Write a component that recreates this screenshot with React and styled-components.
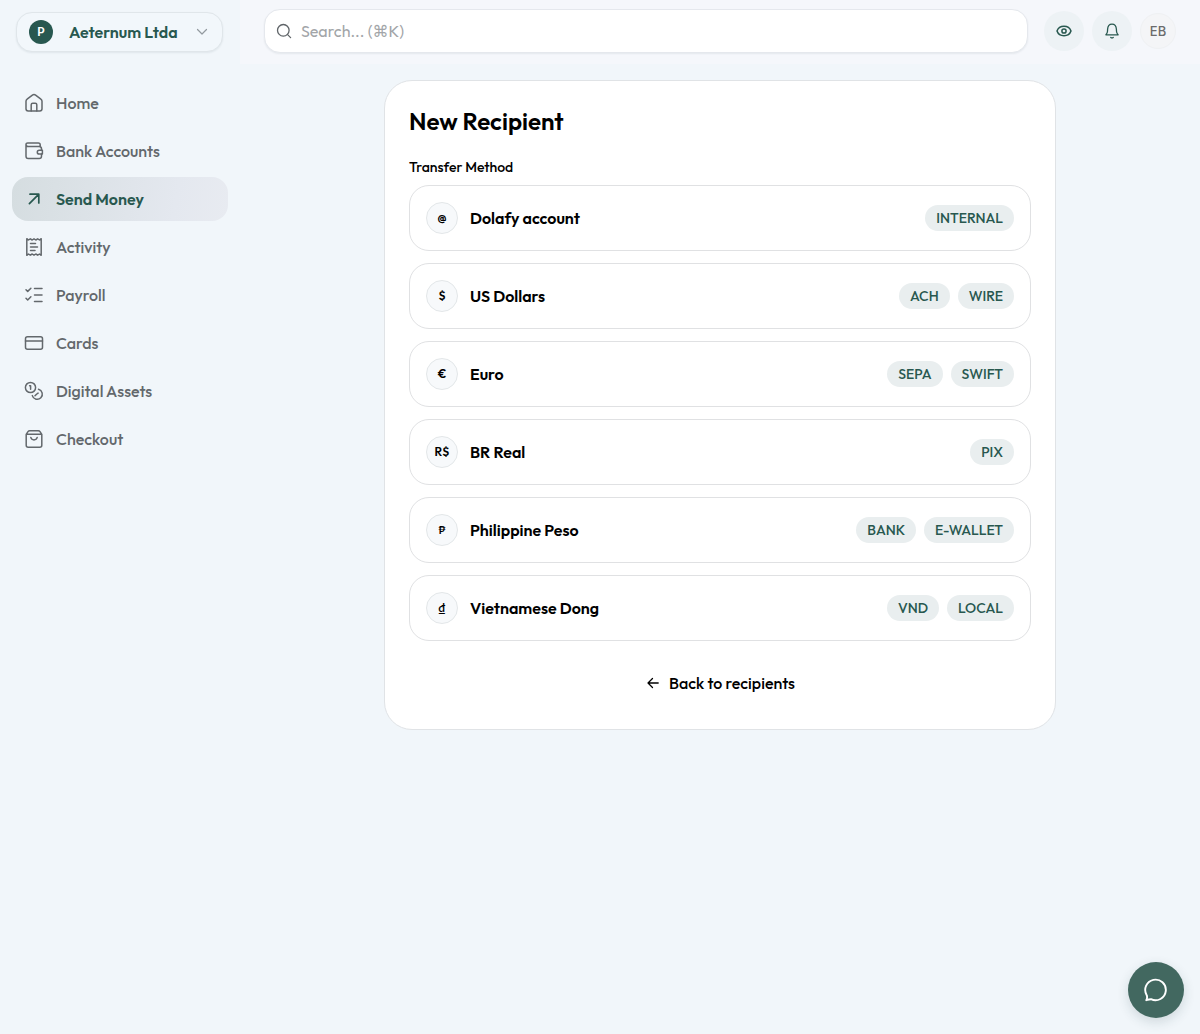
import React from "react";
import styled, { createGlobalStyle } from "styled-components";

const GlobalStyle = createGlobalStyle`
  *, *::before, *::after { box-sizing: border-box; }
  body {
    margin: 0;
    background: #f1f6fa;
    color: #000;
    font-family: Outfit, Lato, "DejaVu Sans", sans-serif;
    font-size: 16px;
    line-height: 24px;
    -webkit-font-smoothing: antialiased;
  }
  button, input { font: inherit; color: inherit; }
  button { cursor: pointer; }
`;

const Shell = styled.div`
  display: flex;
  min-height: 100vh;
`;

const Sidebar = styled.aside`
  flex: 0 0 240px;
  display: flex;
  flex-direction: column;
  gap: 17px;
  padding: 12px;
`;

const Switcher = styled.button`
  display: flex;
  align-items: center;
  height: 40px;
  margin: 0 5px 0 4px;
  padding: 0 12px;
  border: 1px solid #e0e6ea;
  border-radius: 16px;
  background: #f2f7fb;
  box-shadow: 0 1px 2px rgba(20, 50, 60, 0.08);
  color: #28584f;
  font-weight: 600;
`;

const CompanyMark = styled.span`
  display: grid;
  place-items: center;
  width: 24px;
  height: 24px;
  border-radius: 50%;
  background: #285850;
  color: #fff;
  font-size: 12px;
  line-height: 16px;
`;

const CompanyName = styled.span`
  flex: 1;
  padding-left: 16px;
  text-align: left;
  white-space: nowrap;
`;

const Nav = styled.nav`
  display: flex;
  flex-direction: column;
  gap: 4px;
  padding-top: 12px;
`;

const NavLink = styled.a`
  display: flex;
  align-items: center;
  gap: 12px;
  height: 44px;
  padding: 0 12px;
  border-radius: 16px;
  background: ${(p) => (p.$active ? "linear-gradient(100deg, #d5dde0, #e4e8ef 75%, #e8ebf1)" : "transparent")};
  color: ${(p) => (p.$active ? "#28584f" : "#63686c")};
  font-weight: ${(p) => (p.$active ? 600 : 500)};
  text-decoration: none;
`;

const Svg = styled.svg`
  flex: none;
  width: ${(p) => p.$size}px;
  height: ${(p) => p.$size}px;
  fill: none;
  stroke: currentColor;
  stroke-width: ${(p) => p.$stroke || 1.5};
  stroke-linecap: round;
  stroke-linejoin: round;
`;

const Content = styled.div`
  flex: 1;
  min-width: 0;
`;

const Header = styled.header`
  display: flex;
  align-items: center;
  gap: 16px;
  height: 64px;
  padding: 0 24px 2px;
  background: #f5f7fb;
`;

const SearchBox = styled.label`
  flex: 1;
  display: flex;
  align-items: center;
  gap: 9px;
  height: 44px;
  padding: 0 11px;
  border: 1px solid #e5e8ed;
  border-radius: 16px;
  background: #fff;
  box-shadow: 0 1px 2px rgba(20, 40, 60, 0.07);
  color: #5f6468;
`;

const SearchInput = styled.input`
  flex: 1;
  min-width: 0;
  padding: 0;
  border: 0;
  outline: 0;
  background: transparent;
  &::placeholder { color: #a2a5a8; opacity: 1; }
`;

const Actions = styled.div`
  display: flex;
  align-items: center;
  gap: 8px;
`;

const RoundButton = styled.button`
  display: grid;
  place-items: center;
  width: 40px;
  height: 40px;
  padding: 0;
  border: 0;
  border-radius: 50%;
  background: #edf2f5;
  color: #28584f;
`;

const Avatar = styled.button`
  display: grid;
  place-items: center;
  width: 36px;
  height: 36px;
  padding: 0;
  border: 1px solid #eff1f3;
  border-radius: 50%;
  background: #f4f5f7;
  color: #6b6b6c;
  font-family: Inter, sans-serif;
  font-size: 13px;
  font-weight: 500;
`;

const Main = styled.main`
  padding: 16px 24px;
`;

const Card = styled.section`
  max-width: 672px;
  margin: 0 auto;
  padding: 24px;
  border: 1px solid #e0e3e6;
  border-radius: 28px;
  background: #fff;
`;

const Title = styled.h1`
  margin: 0 0 20px;
  font-size: 24px;
  line-height: 32px;
  font-weight: 600;
`;

const GroupLabel = styled.h2`
  margin: 0 0 8px;
  font-size: 14px;
  line-height: 20px;
  font-weight: 500;
`;

const MethodList = styled.div`
  display: flex;
  flex-direction: column;
  gap: 12px;
`;

const Method = styled.button`
  display: flex;
  align-items: center;
  gap: 12px;
  height: 66px;
  padding: 0 16px;
  border: 1px solid #e0e1e3;
  border-radius: 20px;
  background: #fff;
  text-align: left;
`;

const Symbol = styled.span`
  display: grid;
  place-items: center;
  width: 32px;
  height: 32px;
  border: 1px solid #e3e7e9;
  border-radius: 50%;
  background: #f7f9fb;
  font-size: 12px;
  line-height: 16px;
  font-weight: 600;
`;

const MethodName = styled.span`
  flex: 1;
  font-weight: 600;
`;

const Tags = styled.span`
  display: flex;
  gap: 8px;
`;

const Tag = styled.span`
  height: 26px;
  padding: 0 11px;
  border-radius: 13px;
  background: #e9eeef;
  color: #28584f;
  font-size: 14px;
  line-height: 26px;
  font-weight: 500;
`;

const BackButton = styled.button`
  display: flex;
  align-items: center;
  justify-content: center;
  gap: 8px;
  width: 100%;
  height: 44px;
  margin-top: 20px;
  padding: 0;
  border: 0;
  background: transparent;
  font-weight: 500;
`;

const ChatButton = styled.button`
  position: fixed;
  right: 16px;
  bottom: 16px;
  display: grid;
  place-items: center;
  width: 56px;
  height: 56px;
  padding: 0;
  border: 0;
  border-radius: 50%;
  background: #426860;
  color: #fff;
  box-shadow: 0 4px 12px rgba(30, 60, 70, 0.16);
`;

function Icon({ size = 20, box = 20, stroke, children }) {
  return (
    <Svg $size={size} $stroke={stroke} viewBox={`0 0 ${box} ${box}`} aria-hidden="true">
      {children}
    </Svg>
  );
}

const navItems = [
  {
    label: "Home",
    icon: (
      <>
        <path d="M2 8.200c0-.9.4-1.600 1.100-2.100l5.300-4a2.700 2.700 0 0 1 3.200 0l5.300 4c.7.5 1.100 1.200 1.100 2.100v7.600c0 1.200-.9 2.200-2.200 2.200H4.200C3 18 2 17 2 15.800Z" />
        <path d="M7.200 18v-6.300c0-.9.6-1.500 1.500-1.500h2.600c.9 0 1.500.6 1.500 1.500V18" />
      </>
    ),
  },
  {
    label: "Bank Accounts",
    icon: (
      <>
        <path d="M2 3.600v11.700c0 1.300 1 2.300 2.300 2.300h10.900c1.300 0 2.300-1 2.300-2.300v-2.200M2 3.600c0 1.100.8 1.900 1.900 1.900h11.300c1.300 0 2.300 1 2.300 2.300v1.400M2 3.600c0-1 .8-1.700 1.700-1.700h10.600c1.100 0 1.900.8 1.900 1.900v1.900" />
        <path d="M18.400 9.300h-3.200a1.900 1.900 0 0 0 0 3.800h3.200Z" />
      </>
    ),
  },
  { label: "Send Money", active: true, stroke: 1.7, icon: <path d="M5.400 14.600 14.600 5.400M6 5.200h8.800V14" /> },
  {
    label: "Activity",
    icon: (
      <>
        <path d="M2.800 1.700 4.500 3l1.800-1.200L8.200 3 10 1.800 11.800 3l1.900-1.200L15.500 3l1.700-1.300v16.600L15.500 17l-1.800 1.200-1.900-1.200-1.800 1.200L8.200 17l-1.900 1.200L4.500 17l-1.700 1.300Z" />
        <path d="M6.500 6.600h5M6.500 10h7M6.500 13.400h4.500" />
      </>
    ),
  },
  {
    label: "Payroll",
    icon: <path d="m2 4.700 1.700 1.700 3.200-3.200M2 13.300 3.700 15l3.200-3.200M10.500 3.600H18M10.500 10H18M10.500 16.400H18" />,
  },
  {
    label: "Cards",
    icon: (
      <>
        <rect x="1.500" y="3.700" width="17" height="12.600" rx="2" />
        <path d="M1.500 8h17" />
      </>
    ),
  },
  {
    label: "Digital Assets",
    icon: (
      <>
        <circle cx="6.500" cy="6.500" r="5.100" />
        <path d="M5.600 4.800h1v3.500M14.500 8.300a5.100 5.100 0 1 1-6.200 6.300M11 14.800l1.800-1.800M13.700 12.400l.4-.3" />
      </>
    ),
  },
  {
    label: "Checkout",
    icon: (
      <>
        <path d="M2.200 5.300 4 2.600c.4-.6 1-.9 1.700-.9h8.600c.7 0 1.300.3 1.700.9l1.800 2.700v10.900c0 1.100-.9 2-2 2H4.200c-1.100 0-2-.9-2-2ZM2.200 5.300h15.600" />
        <path d="M6.800 8.400a3.300 3.300 0 0 0 6.400 0" />
      </>
    ),
  },
];

const methods = [
  { symbol: "@", name: "Dolafy account", tags: ["INTERNAL"] },
  { symbol: "$", name: "US Dollars", tags: ["ACH", "WIRE"] },
  { symbol: "€", name: "Euro", tags: ["SEPA", "SWIFT"] },
  { symbol: "R$", name: "BR Real", tags: ["PIX"] },
  { symbol: "₱", name: "Philippine Peso", tags: ["BANK", "E-WALLET"] },
  { symbol: "₫", name: "Vietnamese Dong", tags: ["VND", "LOCAL"] },
];

export default function App() {
  return (
    <>
      <GlobalStyle />
      <Shell>
        <Sidebar>
          <Switcher type="button">
            <CompanyMark>P</CompanyMark>
            <CompanyName>Aeternum Ltda</CompanyName>
            <Icon size={16} box={16} stroke={1.2}>
              <path stroke="#939a9f" d="m3.500 5.500 4.500 4.500 4.500-4.500" />
            </Icon>
          </Switcher>
          <Nav aria-label="Main">
            {navItems.map((item) => (
              <NavLink key={item.label} href="#" $active={item.active} aria-current={item.active ? "page" : undefined}>
                <Icon stroke={item.stroke}>{item.icon}</Icon>
                {item.label}
              </NavLink>
            ))}
          </Nav>
        </Sidebar>
        <Content>
          <Header>
            <SearchBox>
              <Icon size={16} box={16} stroke={1.3}>
                <circle cx="7.300" cy="7.300" r="5.800" />
                <path d="m11.600 11.600 3 3" />
              </Icon>
              <SearchInput type="search" aria-label="Search" placeholder="Search... (⌘K)" />
            </SearchBox>
            <Actions>
              <RoundButton type="button" aria-label="Hide balances">
                <Icon size={16} box={16}>
                  <path d="M1 8c1-2.800 3.800-4.700 7-4.700S14 5.200 15 8c-1 2.800-3.800 4.700-7 4.700S2 10.800 1 8Z" />
                  <circle cx="8" cy="8" r="2.100" />
                </Icon>
              </RoundButton>
              <RoundButton type="button" aria-label="Notifications">
                <Icon size={16} box={16} stroke={1.3}>
                  <path d="M1.900 11.800c1-.9 1.500-2 1.600-3.500l.1-2.100C3.800 3.200 5.500 1.200 8 1.200s4.200 2 4.400 5l.1 2.100c.1 1.500.6 2.600 1.600 3.500Z" />
                  <path d="M6.800 14.500c.7.500 1.700.5 2.400 0" />
                </Icon>
              </RoundButton>
              <Avatar type="button">EB</Avatar>
            </Actions>
          </Header>
          <Main>
            <Card>
              <Title>New Recipient</Title>
              <GroupLabel id="method-label">Transfer Method</GroupLabel>
              <MethodList role="group" aria-labelledby="method-label">
                {methods.map((m) => (
                  <Method type="button" key={m.name}>
                    <Symbol>{m.symbol}</Symbol>
                    <MethodName>{m.name}</MethodName>
                    <Tags>
                      {m.tags.map((t) => (
                        <Tag key={t}>{t}</Tag>
                      ))}
                    </Tags>
                  </Method>
                ))}
              </MethodList>
              <BackButton type="button">
                <Icon size={16} box={16} stroke={1.3}>
                  <path d="M13.200 8H3M7.500 3.500 3 8l4.500 4.500" />
                </Icon>
                Back to recipients
              </BackButton>
            </Card>
          </Main>
        </Content>
      </Shell>
      <ChatButton type="button" aria-label="Open chat">
        <Icon size={24} box={24} stroke={1.9}>
          <path d="M2.300 22.200c.9-1.600 1-3.200.5-4.800A10.300 10.300 0 1 1 7 21.200c-1.600.2-3.200.6-4.700 1Z" />
        </Icon>
      </ChatButton>
    </>
  );
}
